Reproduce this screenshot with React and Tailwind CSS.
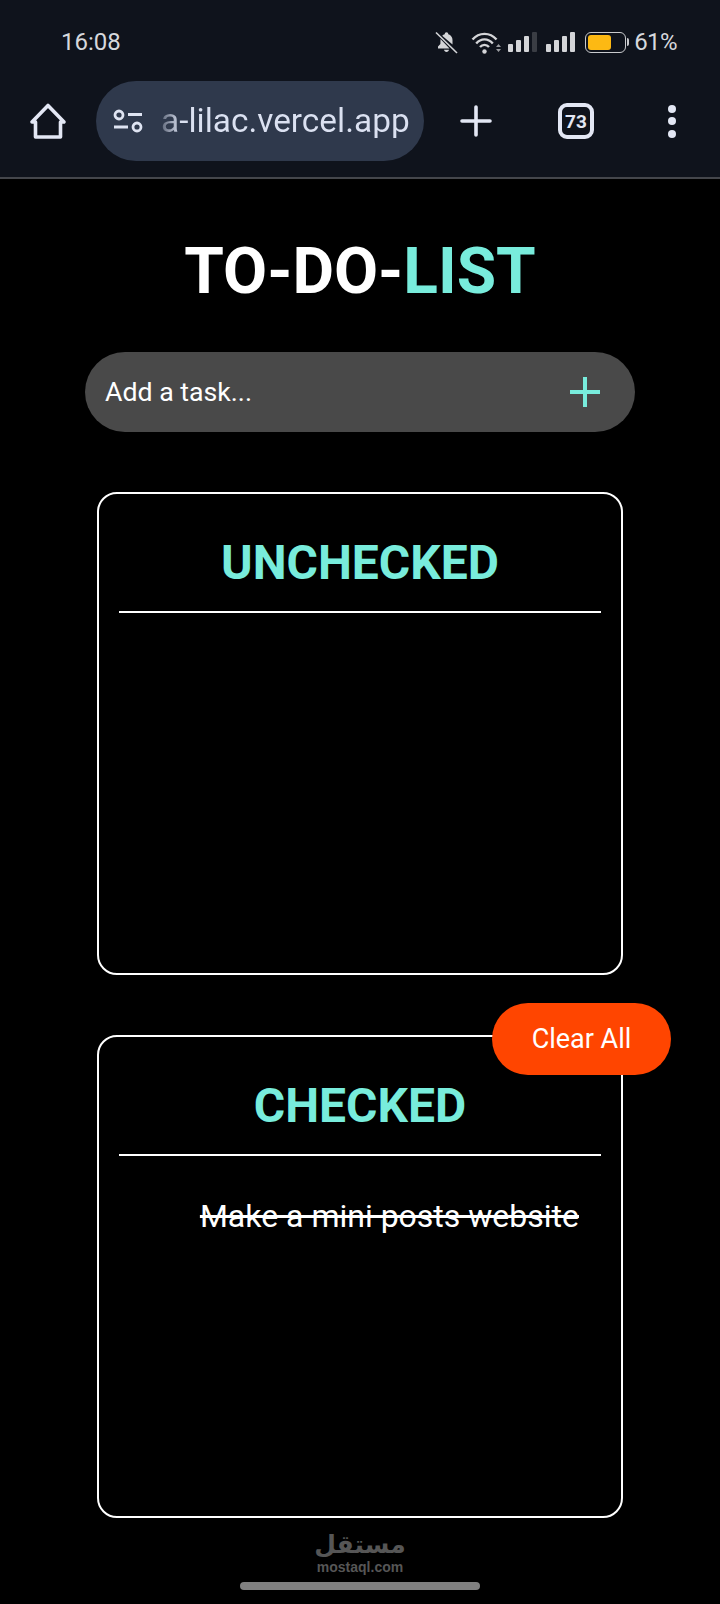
import React from "react";

function Signal({ weak }) {
  const hs = [8, 12, 16, 20];
  return (
    <div className="flex items-end gap-[3px] h-[20px]">
      {hs.map((h, i) => (
        <div
          key={i}
          className={"w-[5px] rounded-[1px] " + (weak && i === 3 ? "bg-[#3a3d44]" : "bg-[#d4d5d8]")}
          style={{ height: h }}
        />
      ))}
    </div>
  );
}

export default function App() {
  return (
    <div className="relative w-[720px] h-[1604px] bg-black overflow-hidden font-['Roboto',sans-serif]">
      <header className="h-[179px] bg-[#0f131c] border-b-2 border-[#44464b]">
        <div className="h-[81px] flex items-center pl-[61px] pr-[43px] pt-[3px] text-[24px] leading-none text-[#d6d8dc]">
          <span>16:08</span>
          <div className="ml-auto flex items-center">
            <svg width="23" height="23" viewBox="0 0 23 23" fill="#d4d5d8">
              <path d="M5.500 8 5.400 13 3 15.500V17.500H14.500Z" />
              <path d="M7.200 4.800C7.900 4 8.700 3.500 9.700 3.200 9.800 2 10.300 1.200 11.500 1.200 12.700 1.200 13.200 2 13.300 3.200 15.900 4 17.500 6.200 17.500 9V13.500Z" />
              <path d="M9 18.800H14C13.800 20 12.900 21 11.500 21 10.100 21 9.200 20 9 18.800Z" />
              <path d="M1 1.500 22 22" stroke="#d4d5d8" strokeWidth="1.600" />
            </svg>
            <svg className="ml-[13px]" width="30" height="23" viewBox="0 0 30 23" fill="none" stroke="#d4d5d8" strokeWidth="2.400">
              <path d="M1.500 8.500C8 1 19 1 25.500 8.500" />
              <path d="M5.200 12.500C10 7 17 7 21.800 12.500" />
              <path d="M9 16C11.500 13.200 15.500 13.200 18 16" />
              <circle cx="13.500" cy="20.500" r="2.200" fill="#d4d5d8" stroke="none" />
              <path d="M25 16 27.500 13 30 16ZM25 18 27.500 21 30 18Z" fill="#9a9ca0" stroke="none" />
            </svg>
            <div className="ml-[7px]"><Signal weak /></div>
            <div className="ml-[9px]"><Signal /></div>
            <div className="ml-[10px] flex items-center">
              <div className="w-[41px] h-[21px] rounded-[6px] border border-[#c9cacd] p-[2px]">
                <div className="w-[23px] h-full rounded-[3px] bg-[#fdb913]" />
              </div>
              <div className="w-[2px] h-[8px] ml-[1px] rounded-r bg-[#c9cacd]" />
            </div>
            <span className="ml-[5px] tracking-[-0.6px]">61%</span>
          </div>
        </div>
        <div className="flex items-center h-[80px]">
          <svg className="ml-[29px]" width="38" height="38" viewBox="0 0 38 38" fill="none" stroke="#e3e7f4" strokeWidth="3.600" strokeLinejoin="round" strokeLinecap="round">
            <path d="M3 20 19 3.500 35 20H31.500V35H6.500V20Z" />
          </svg>
          <div className="ml-[29px] w-[328px] h-[80px] rounded-full bg-[#2f394c] flex items-center overflow-hidden">
            <svg className="ml-[17px] shrink-0" width="32" height="28" viewBox="0 0 32 28" fill="none" stroke="#dfe4f2" strokeWidth="2.800">
              <circle cx="6" cy="8" r="4" />
              <path d="M15 7.500H29M1 20H15" />
              <circle cx="24" cy="20" r="4" />
            </svg>
            <span className="ml-[16px] text-[33.400px] leading-none whitespace-nowrap bg-[linear-gradient(90deg,#5d6678_0px,#dbe1f1_20px)] bg-clip-text text-transparent">
              a-lilac.vercel.app
            </span>
          </div>
          <svg className="ml-[36px]" width="32" height="32" viewBox="0 0 32 32" stroke="#e3e7f4" strokeWidth="3.600" strokeLinecap="round">
            <path d="M16 2V30M2 16H30" />
          </svg>
          <div className="ml-[66px] w-[36px] h-[36px] rounded-[9px] border-[4px] border-[#e3e7f4] flex items-center justify-center text-[19px] font-bold text-[#e3e7f4] leading-none">
            73
          </div>
          <div className="ml-[74px] flex flex-col gap-[4.500px]">
            <div className="w-[8px] h-[8px] rounded-full bg-[#e3e7f4]" />
            <div className="w-[8px] h-[8px] rounded-full bg-[#e3e7f4]" />
            <div className="w-[8px] h-[8px] rounded-full bg-[#e3e7f4]" />
          </div>
        </div>
      </header>

      <main className="flex flex-col items-center">
        <h1 className="mt-[57px] text-[64px] leading-[72px] font-bold text-white">
          TO-DO-<span className="text-[#78ecdc]">LIST</span>
        </h1>
        <div className="mt-[44px] w-[550px] h-[80px] rounded-[40px] bg-[#494949] flex items-center pl-[20px] pr-[34px]">
          <span className="text-[26.700px] text-white">Add a task...</span>
          <svg className="ml-auto" width="32" height="32" viewBox="0 0 32 32" stroke="#78ecdc" strokeWidth="4">
            <path d="M16 1V31M1 16H31" />
          </svg>
        </div>

        <section className="mt-[60px] w-[526px] h-[483px] rounded-[20px] border-2 border-white px-[20px]">
          <h2 className="mt-[39px] h-[60px] text-center text-[48px] leading-[60px] font-bold text-[#78ecdc]">UNCHECKED</h2>
          <div className="mt-[18px] h-[2px] bg-white" />
        </section>

        <section className="relative mt-[60px] w-[526px] h-[483px] rounded-[20px] border-2 border-white px-[20px]">
          <button className="absolute left-[393px] top-[-34px] w-[179px] h-[72px] pt-[1px] rounded-[36px] bg-[#ff4500] text-white text-[27px]">
            Clear All
          </button>
          <h2 className="mt-[39px] h-[60px] text-center text-[48px] leading-[60px] font-bold text-[#78ecdc]">CHECKED</h2>
          <div className="mt-[18px] h-[2px] bg-white" />
          <p className="mt-[40px] text-right pr-[22px] text-[32px] leading-[40px] text-white line-through">
            Make a mini posts website
          </p>
        </section>
      </main>

      <div className="absolute left-[317px] top-[1530px] w-[86px] flex flex-col items-center text-[#565656]">
        <span className="h-[30px] text-[25px] leading-[30px] font-bold font-['DejaVu_Sans',sans-serif]" dir="rtl">مستقل</span>
        <span className="text-[14px] leading-[14px] font-bold font-['Liberation_Sans',sans-serif]">mostaql.com</span>
      </div>
      <div className="absolute left-[240px] top-[1582px] w-[240px] h-[8px] rounded-full bg-[#808080]" />
    </div>
  );
}
